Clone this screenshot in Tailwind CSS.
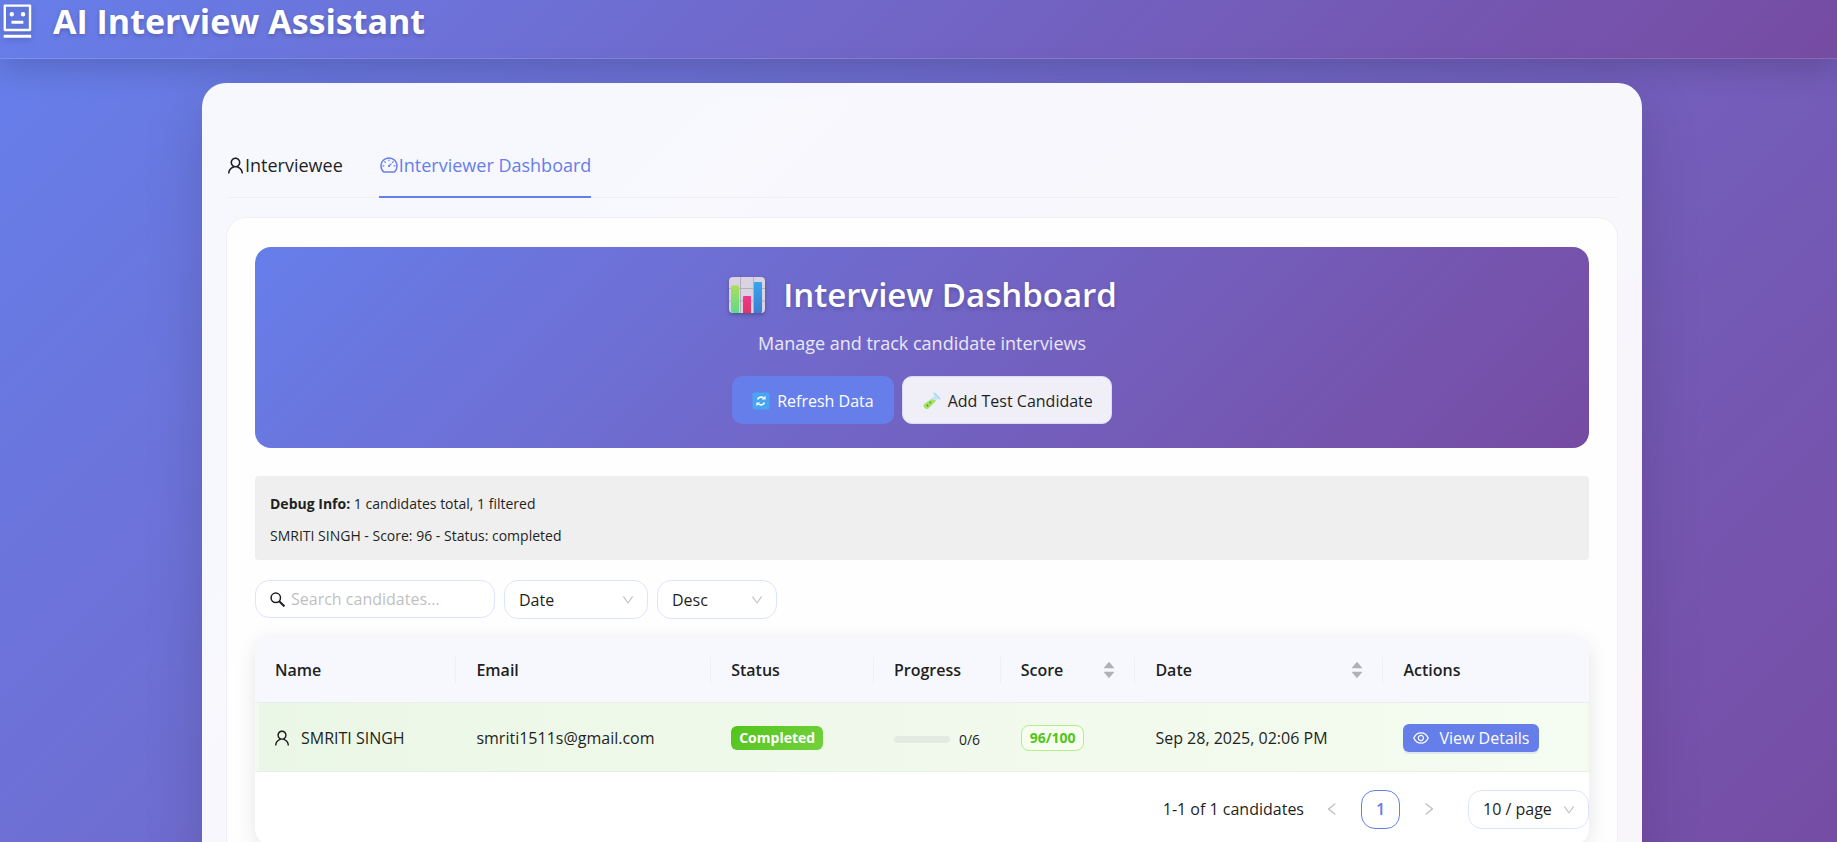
<!DOCTYPE html>
<html lang="en">
<head>
<meta charset="utf-8">
<meta name="viewport" content="width=device-width, initial-scale=1">
<title>AI Interview Assistant</title>
<script src="https://cdn.jsdelivr.net/npm/@tailwindcss/browser@4"></script>
</head>
<body class="min-h-screen bg-[#764ba2] font-['Open_Sans','Noto_Sans',sans-serif] text-base text-[#1f1f1f] overflow-hidden">
<svg class="hidden" aria-hidden="true">
  <symbol id="user" viewBox="136 112 752 800"><path d="M858.5 763.6a374 374 0 00-80.6-119.5 375.63 375.63 0 00-119.5-80.6c-.4-.2-.8-.3-1.2-.5C719.5 518 760 444.7 760 362c0-137-111-248-248-248S264 225 264 362c0 82.7 40.5 156 102.8 201.1-.4.2-.8.3-1.2.5-44.8 18.9-85 46-119.5 80.6a375.63 375.63 0 00-80.6 119.5A371.7 371.7 0 00136 901.8a8 8 0 008 8.2h60c4.4 0 7.9-3.5 8-7.8 2-77.2 33-149.5 87.8-204.3 56.7-56.7 132-87.9 212.2-87.9s155.5 31.2 212.2 87.9C779 752.7 810 825 812 902.2c.1 4.4 3.6 7.8 8 7.8h60a8 8 0 008-8.2c-1-47.8-10.9-94.3-29.5-138.2zM512 534c-45.9 0-89.1-17.9-121.6-50.4S340 407.9 340 362c0-45.9 17.9-89.1 50.4-121.6S466.1 190 512 190s89.1 17.9 121.6 50.4S684 316.1 684 362c0 45.9-17.9 89.1-50.4 121.6S557.9 534 512 534z"/></symbol>
  <symbol id="down" viewBox="0 0 1024 1024"><path d="M884 256h-75c-5.1 0-9.9 2.5-12.9 6.6L512 654.2 227.9 262.6c-3-4.1-7.8-6.6-12.9-6.6h-75c-6.5 0-10.3 7.4-6.5 12.7l352.6 486.1c12.8 17.6 39 17.6 51.7 0l352.6-486.1c3.9-5.3.1-12.7-6.4-12.7z"/></symbol>
  <symbol id="left" viewBox="0 0 1024 1024"><path d="M724 218.3V141c0-6.7-7.7-10.4-12.9-6.3L260.3 486.8a31.86 31.86 0 000 50.3l450.8 352.1c5.3 4.1 12.9.4 12.9-6.3v-77.3c0-4.9-2.3-9.6-6.1-12.6l-360-281 360-281.1c3.8-3 6.1-7.7 6.1-12.6z"/></symbol>
  <symbol id="sort" viewBox="0 0 10 16"><path d="M.4 6.2h9.2c.4 0 .5-.3.3-.6L5.4.3a.5.5 0 0 0-.8 0L.1 5.6c-.2.3-.1.6.3.6zM.4 9.8h9.2c.4 0 .5.3.3.6l-4.5 5.3a.5.5 0 0 1-.8 0L.1 10.4c-.2-.3-.1-.6.3-.6z"/></symbol>
</svg>

<header class="relative h-[59px] border-b border-white/15 bg-linear-135 from-[#667eea] to-[#764ba2] shadow-[0_8px_32px_rgba(0,0,0,0.18)]">
  <div class="flex h-[42px] items-center gap-[17px] text-white">
    <svg class="h-[38px] w-9 drop-shadow-[0_2px_3px_rgba(0,0,0,0.2)]" viewBox="48 0 960 1024" fill="currentColor" aria-hidden="true"><path d="M300 328a60 60 0 10120 0 60 60 0 10-120 0zM852 64H172c-17.7 0-32 14.3-32 32v660c0 17.7 14.3 32 32 32h680c17.7 0 32-14.3 32-32V96c0-17.7-14.3-32-32-32zm-32 660H204V128h616v596zM604 328a60 60 0 10120 0 60 60 0 10-120 0zm250.2 556H169.8c-16.5 0-29.8 14.3-29.8 32v36c0 4.4 3.3 8 7.4 8h729.1c4.1 0 7.4-3.6 7.4-8v-36c.1-17.7-13.2-32-29.7-32zM664 508H360c-4.4 0-8 3.6-8 8v60c0 4.4 3.6 8 8 8h304c4.4 0 8-3.6 8-8v-60c0-4.4-3.6-8-8-8z"/></svg>
    <h1 class="text-[34px] leading-10 font-bold [text-shadow:0_2px_4px_rgba(0,0,0,0.2)]">AI Interview Assistant</h1>
  </div>
</header>

<div class="bg-linear-135 from-[#667eea] to-[#764ba2] pt-6 pb-6 pl-[7px]">
<main class="relative mx-auto max-w-[1440px] rounded-3xl bg-white/95 px-6 pt-12 pb-6 shadow-[0_20px_60px_rgba(0,0,0,0.15)]">
  <div class="flex gap-9 border-b border-[#efeff4] text-lg" role="tablist">
    <button class="flex h-[66px] items-center border-b-2 border-transparent pt-1" role="tab" type="button">
      <svg class="mx-[2px] h-[17px] w-[15px]" fill="currentColor" aria-hidden="true"><use href="#user"/></svg>Interviewee
    </button>
    <button class="-mb-px flex h-[67px] items-center border-b-2 border-[#667eea] pt-[3px] text-[#667eea]" role="tab" aria-selected="true" type="button">
      <svg class="size-5" viewBox="0 0 1024 1024" fill="currentColor" aria-hidden="true"><path d="M924.8 385.6a446.7 446.7 0 00-96-142.4 446.7 446.7 0 00-142.4-96C631.1 123.8 572.5 112 512 112s-119.1 11.8-174.4 35.2a446.7 446.7 0 00-142.4 96 446.7 446.7 0 00-96 142.4C75.8 440.9 64 499.5 64 560c0 132.7 58.3 257.7 159.9 343.1l1.7 1.4c5.8 4.8 13.1 7.5 20.6 7.5h531.7c7.5 0 14.8-2.7 20.6-7.5l1.7-1.4C901.7 817.7 960 692.7 960 560c0-60.5-11.9-119.1-35.2-174.4zM761.4 836H262.6A371.12 371.12 0 01140 560c0-99.4 38.7-192.8 109-263 70.3-70.3 163.7-109 263-109 99.4 0 192.8 38.7 263 109 70.3 70.3 109 163.7 109 263 0 105.6-44.5 205.5-122.6 276zM623.5 421.5a8.03 8.03 0 00-11.3 0L527.7 506c-18.7-5-39.4-.2-54.1 14.5a55.95 55.95 0 000 79.2 55.95 55.95 0 0079.2 0 55.87 55.87 0 0014.5-54.1l84.5-84.5c3.1-3.1 3.1-8.2 0-11.3l-28.3-28.3zM490 320h44c4.4 0 8-3.6 8-8v-80c0-4.4-3.6-8-8-8h-44c-4.4 0-8 3.6-8 8v80c0 4.4 3.6 8 8 8zm260 218v44c0 4.4 3.6 8 8 8h80c4.4 0 8-3.6 8-8v-44c0-4.4-3.6-8-8-8h-80c-4.4 0-8 3.6-8 8zm12.7-197.2l-31.1-31.1a8.03 8.03 0 00-11.3 0l-56.6 56.6a8.03 8.03 0 000 11.3l31.1 31.1c3.1 3.1 8.2 3.1 11.3 0l56.6-56.6c3.1-3.1 3.1-8.2 0-11.3zm-458.6-31.1a8.03 8.03 0 00-11.3 0l-31.1 31.1a8.03 8.03 0 000 11.3l56.6 56.6c3.1 3.1 8.2 3.1 11.3 0l31.1-31.1c3.1-3.1 3.1-8.2 0-11.3l-56.6-56.6zM262 530h-80c-4.4 0-8 3.6-8 8v44c0 4.4 3.6 8 8 8h80c4.4 0 8-3.6 8-8v-44c0-4.4-3.6-8-8-8z"/></svg>Interviewer Dashboard
    </button>
  </div>

  <section class="mt-[19px] rounded-[20px] border border-[#efeff4] bg-white/90 px-7 pt-[29px] pb-7">
    <div class="flex flex-col items-center rounded-2xl bg-linear-135 from-[#667eea] to-[#764ba2] p-6 text-white">
      <h2 class="flex h-12 items-center gap-4 text-[33px] font-semibold [text-shadow:0_2px_4px_rgba(0,0,0,0.2)]">
        <svg class="size-10 drop-shadow-[0_2px_2px_rgba(0,0,0,0.25)]" viewBox="0 0 40 40" aria-hidden="true">
          <defs><linearGradient id="gg" x2="0" y2="1"><stop stop-color="#a8e05c"/><stop offset="1" stop-color="#5fd98c"/></linearGradient><linearGradient id="gr" x2="0" y2="1"><stop stop-color="#f0388c"/><stop offset="1" stop-color="#e03462"/></linearGradient><linearGradient id="gb" x2="0" y2="1"><stop stop-color="#37a6f2"/><stop offset="1" stop-color="#3b7ed0"/></linearGradient></defs>
          <rect x="2" y="2" width="36" height="36" rx="4" fill="#d9d3e2"/>
          <path d="M13.500 2v36M26.500 2v36M2 13.500h36M2 26h36" stroke="#b5adc0" stroke-width="1"/>
          <path d="M4 11.500a1 1 0 0 1 1-1h6a1 1 0 0 1 1 1V38H6a2.500 2.500 0 0 1-2-2z" fill="url(#gg)"/>
          <path d="M16 22a1 1 0 0 1 1-1h6a1 1 0 0 1 1 1v16h-8z" fill="url(#gr)"/>
          <path d="M27 8a1 1 0 0 1 1-1h6a1 1 0 0 1 1 1v29a2 2 0 0 1-1 1h-7z" fill="url(#gb)"/>
        </svg>
        Interview Dashboard
      </h2>
      <p class="mt-2 text-lg leading-8 text-white/85">Manage and track candidate interviews</p>
      <div class="mt-[17px] flex gap-2">
        <button type="button" class="flex h-12 items-center gap-[7px] rounded-[10px] bg-[#667eea] px-5 pt-0.5">
          <svg class="size-[18px]" viewBox="0 0 18 18" fill="none" aria-hidden="true"><rect x=".5" y=".5" width="17" height="17" rx="2" fill="#4aa5f0"/><path d="M5.500 7.500a3.800 3.800 0 0 1 6-1.500M12.500 10.500a3.800 3.800 0 0 1-6 1.500" stroke="#fff" stroke-width="1.600"/><path d="M9.800 7.600h3.800V3.800zM8.200 10.400H4.400v3.800z" fill="#fff"/></svg>
          Refresh Data
        </button>
        <button type="button" class="flex h-12 items-center gap-[7px] rounded-[10px] border border-[#dcdcf4] bg-[#f0eff8] pt-0.5 pr-[18px] pl-5 text-[#1f1f1f]">
          <svg class="size-[18px]" viewBox="0 0 18 18" aria-hidden="true"><path d="M12 3.500 15 6.500 6 16a3 3 0 0 1-4.400-4.200z" fill="#c3e6f5"/><path d="M8.500 7.200l4.800 1.200L6 16a3 3 0 0 1-4.400-4.200z" fill="#a4e35f"/><path d="M11.500 1.500l5 5" stroke="#b4dcf2" stroke-width="2.200" stroke-linecap="round"/><circle cx="4.500" cy="13.500" r="1" fill="#3f9b3a"/><circle cx="7.300" cy="10.500" r="1" fill="#4da83e"/></svg>
          Add Test Candidate
        </button>
      </div>
    </div>

    <div class="mt-7 rounded bg-[#efefef] px-[15px] pt-[13px] pb-2 text-sm">
      <p class="leading-[30px]"><strong class="font-bold">Debug Info:</strong> 1 candidates total, 1 filtered</p>
      <p class="leading-[33px]">SMRITI SINGH - Score: 96 - Status: completed</p>
    </div>

    <div class="mt-5 flex items-start gap-[9px]">
      <label class="flex h-[38px] w-60 items-center gap-[6px] rounded-[14px] border border-[#dfe4fb] bg-white px-[14px]">
        <svg class="size-[15px] shrink-0" viewBox="0 0 15 15" fill="none" stroke="currentColor" stroke-width="1.500" aria-hidden="true"><circle cx="5.800" cy="5.800" r="4.700"/><path d="M9.200 9.200l5.200 5.200" stroke-width="2"/></svg>
        <input type="text" aria-label="Search candidates" placeholder="Search candidates..." class="w-full min-w-0 outline-none placeholder:text-[#bfbfbf]">
      </label>
      <div class="relative">
        <select aria-label="Sort by" class="h-[39px] w-36 appearance-none rounded-[14px] border border-[#dfe4fb] bg-white px-[14px]"><option>Date</option></select>
        <svg class="pointer-events-none absolute top-[13px] right-[13px] size-[14px]" fill="#bfbfbf" aria-hidden="true"><use href="#down"/></svg>
      </div>
      <div class="relative">
        <select aria-label="Sort order" class="h-[39px] w-30 appearance-none rounded-[14px] border border-[#dfe4fb] bg-white px-[14px]"><option>Desc</option></select>
        <svg class="pointer-events-none absolute top-[13px] right-[13px] size-[14px]" fill="#bfbfbf" aria-hidden="true"><use href="#down"/></svg>
      </div>
    </div>

    <div class="mt-[18px] overflow-hidden rounded-2xl bg-white pb-4 shadow-[0_4px_20px_rgba(0,0,0,0.1)]">
      <table class="w-full table-fixed text-left">
        <colgroup><col class="w-[15.1%]"><col class="w-[19.1%]"><col class="w-[12.2%]"><col class="w-[9.5%]"><col class="w-[10.1%]"><col class="w-[18.6%]"><col></colgroup>
        <thead>
          <tr class="h-[65px] border-b border-[#ebebf0] bg-[#f7f8fe] *:p-0 *:pt-0.5 *:font-semibold">
            <th><div class="flex h-[27px] items-center border-r border-[#efeff4] pl-5">Name</div></th>
            <th><div class="flex h-[27px] items-center border-r border-[#efeff4] pl-5">Email</div></th>
            <th><div class="flex h-[27px] items-center border-r border-[#efeff4] pl-5">Status</div></th>
            <th><div class="flex h-[27px] items-center border-r border-[#efeff4] pl-5">Progress</div></th>
            <th><div class="flex h-[27px] items-center justify-between border-r border-[#efeff4] pr-5 pl-5">Score<svg class="h-4 w-[10px]" fill="#b0b1b6" aria-hidden="true"><use href="#sort"/></svg></div></th>
            <th><div class="flex h-[27px] items-center justify-between border-r border-[#efeff4] pr-5 pl-5">Date<svg class="h-4 w-[10px]" fill="#b0b1b6" aria-hidden="true"><use href="#sort"/></svg></div></th>
            <th><div class="flex h-[27px] items-center pl-5">Actions</div></th>
          </tr>
        </thead>
        <tbody>
          <tr class="h-[69px] border-b border-[#ebebf0] bg-linear-to-r from-[#ebf7e6] to-[#f5fcf1] whitespace-nowrap *:p-0 *:pt-0.5 *:pl-5">
            <td class="shadow-[inset_4px_0_0_#f2f9ef]"><div class="flex items-center gap-3"><svg class="h-4 w-[14px]" fill="currentColor" aria-hidden="true"><use href="#user"/></svg>SMRITI SINGH</div></td>
            <td>smriti1511s@gmail.com</td>
            <td><span class="flex h-6 w-fit items-center rounded-md bg-linear-135 from-[#52c41a] to-[#73d13d] px-2 text-sm font-bold text-white">Completed</span></td>
            <td><div class="flex items-center gap-[9px] pt-1 text-sm"><div class="h-[7px] w-14 rounded-full bg-[#e3ebe0]" role="progressbar" aria-label="Progress" aria-valuenow="0" aria-valuemax="6"></div>0/6</div></td>
            <td><span class="flex h-[26px] w-fit items-center rounded-lg border border-[#b7eb8f] bg-[#f6ffed] px-2 text-sm font-bold text-[#52c41a]">96/100</span></td>
            <td>Sep 28, 2025, 02:06 PM</td>
            <td><button type="button" class="flex h-7 items-center gap-[10px] rounded-md bg-[#667eea] pr-[9px] pl-[10px] text-white shadow-[0_2px_0_rgba(102,126,234,0.15)]"><svg class="size-4" viewBox="64 64 896 896" fill="currentColor" aria-hidden="true"><path d="M942.2 486.2C847.4 286.5 704.1 186 512 186c-192.2 0-335.4 100.5-430.2 300.3a60.3 60.3 0 000 51.5C176.6 737.5 319.9 838 512 838c192.2 0 335.4-100.5 430.2-300.3 7.7-16.2 7.7-35 0-51.5zM512 766c-161.3 0-279.4-81.8-362.7-254C232.600 339.800 350.700 258 512 258c161.300 0 279.400 81.800 362.700 254C791.500 684.200 673.400 766 512 766zm-4-430c-97.200 0-176 78.800-176 176s78.800 176 176 176 176-78.800 176-176-78.800-176-176-176zm0 288c-61.900 0-112-50.100-112-112s50.100-112 112-112 112 50.100 112 112-50.100 112-112 112z"/></svg>View Details</button></td>
          </tr>
        </tbody>
      </table>
      <nav class="mt-[18px] flex items-center justify-end" aria-label="Pagination">
        <span>1-1 of 1 candidates</span>
        <button type="button" disabled aria-label="Previous page" class="ml-[9px] flex size-[38px] items-center justify-center"><svg class="size-4" fill="#bfbfbf" aria-hidden="true"><use href="#left"/></svg></button>
        <button type="button" aria-current="page" class="ml-[10px] size-[39px] rounded-[14px] border border-[#667eea] bg-white font-semibold text-[#667eea]">1</button>
        <button type="button" disabled aria-label="Next page" class="ml-[10px] flex size-[38px] items-center justify-center"><svg class="size-4 rotate-180" fill="#bfbfbf" aria-hidden="true"><use href="#left"/></svg></button>
        <div class="relative ml-5">
          <select aria-label="Page size" class="h-[39px] w-[121px] appearance-none rounded-[14px] border border-[#dfe4fb] bg-white px-[14px]"><option>10 / page</option></select>
          <svg class="pointer-events-none absolute top-[13px] right-[13px] size-[14px]" fill="#bfbfbf" aria-hidden="true"><use href="#down"/></svg>
        </div>
      </nav>
    </div>
  </section>
</main>
</div>
</body>
</html>
